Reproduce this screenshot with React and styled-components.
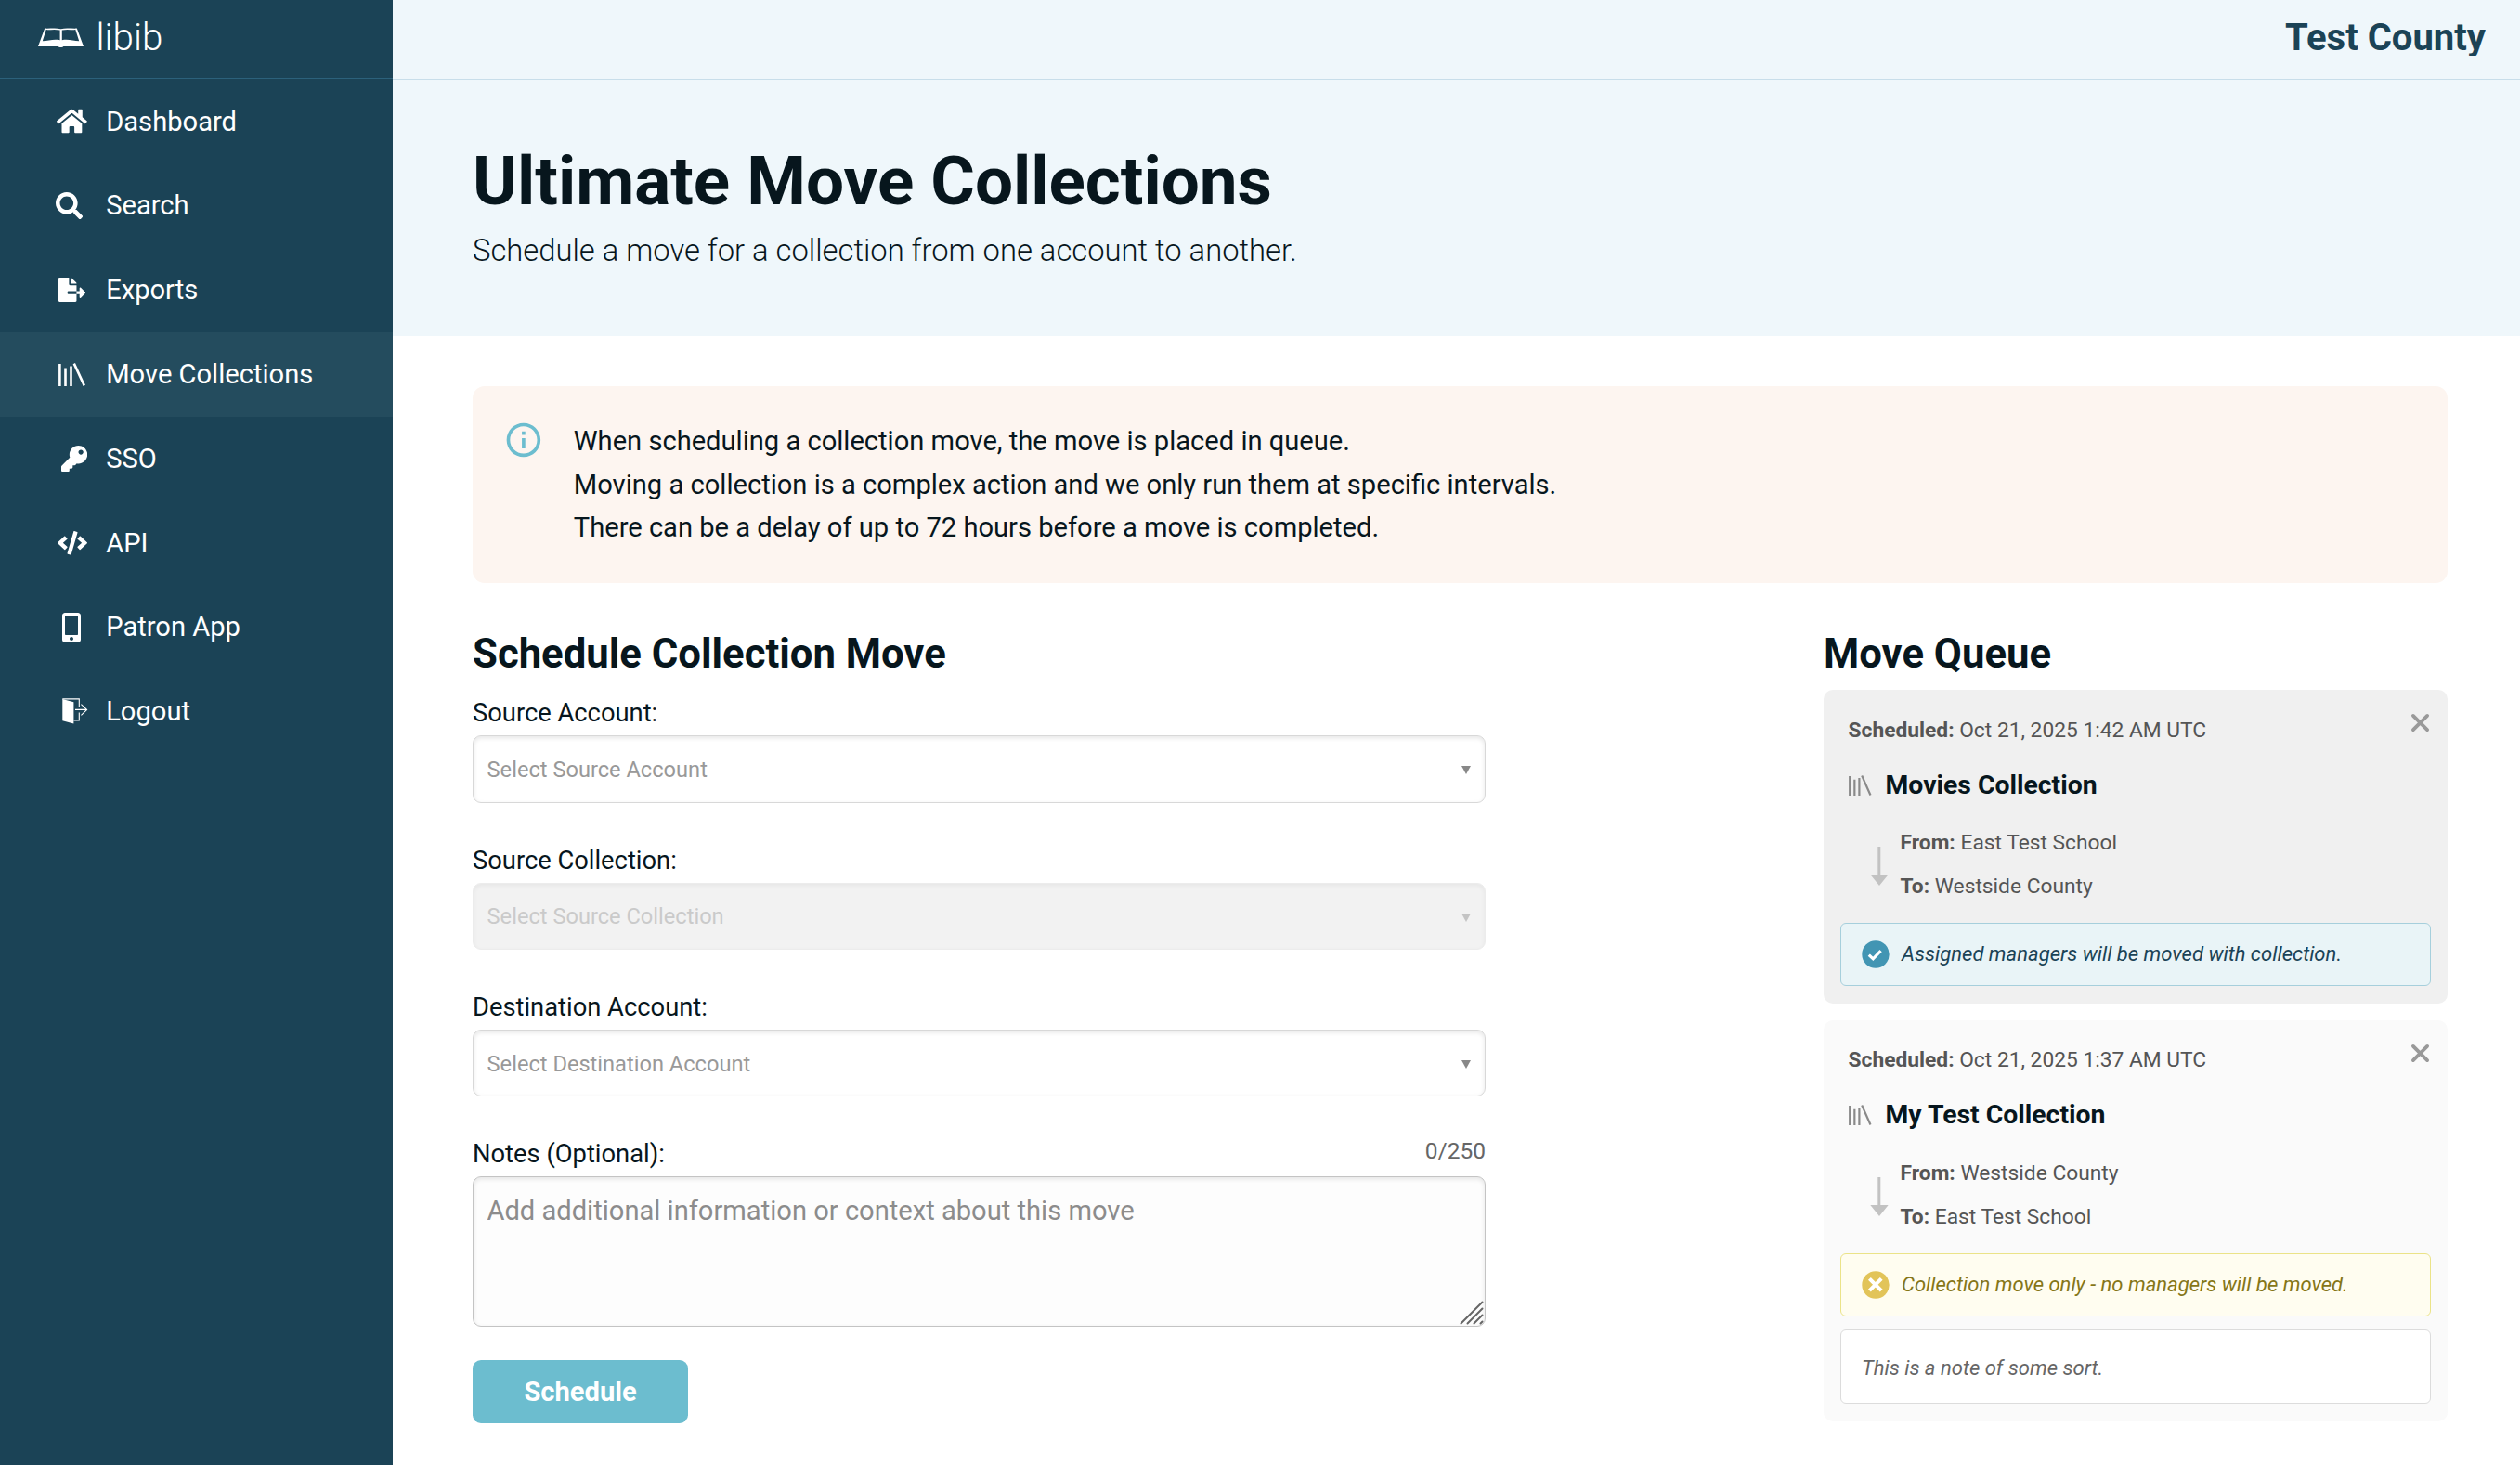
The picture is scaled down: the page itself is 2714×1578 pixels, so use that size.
import React from "react";
import styled, { createGlobalStyle, css } from "styled-components";
import { FaHome, FaSearch, FaFileExport, FaKey, FaCode, FaMobileAlt } from "react-icons/fa";
import { MdInfoOutline } from "react-icons/md";

const GlobalStyle = createGlobalStyle`
  *, *::before, *::after { box-sizing: border-box; }
  body {
    margin: 0;
    background: #fff;
    color: #07161d;
    font-family: Roboto, "Liberation Sans", sans-serif;
    font-size: 29.12px;
    line-height: 1.6;
  }
  h1, h2, h3, p { margin: 0; }
`;

const Page = styled.div`
  display: flex;
  height: 1578px;
  overflow: hidden;
`;

/* ---------- Sidebar ---------- */

const Sidebar = styled.aside`
  flex: none;
  width: 423px;
  background: #1b4356;
  color: #fff;
`;

const Brand = styled.div`
  display: flex;
  height: 85px;
  padding-left: 41px;
  border-bottom: 1px solid #2c617b;
`;

const BrandMark = styled.svg`
  flex: none;
  width: 49px;
  height: 22px;
  margin-top: 30px;
`;

const BrandName = styled.span`
  margin-left: 13.5px;
  font-size: 40.3px;
  font-weight: 300;
  line-height: 82px;
`;

const Nav = styled.nav`
  padding-top: 0.5px;
`;

const NavItem = styled.a`
  display: flex;
  align-items: center;
  height: 90.8px;
  background: ${(p) => (p.$active ? "#244c5e" : "transparent")};
  color: #fff;
  text-decoration: none;
`;

const NavIcon = styled.span`
  display: flex;
  flex: none;
  align-items: center;
  width: 114.2px;
  padding-left: ${(p) => p.$left}px;

  svg {
    flex: none;
    width: ${(p) => p.$w}px;
    height: ${(p) => p.$h}px;
  }
`;

/* ---------- Main ---------- */

const Main = styled.main`
  flex: 1;
  min-width: 0;
`;

const TopBar = styled.header`
  display: flex;
  justify-content: flex-end;
  height: 86px;
  padding: 20px 37px 0 0;
  background: #eff7fb;
  border-bottom: 1px solid #c8deea;
`;

const OrgName = styled.div`
  height: 40px;
  overflow: hidden;
  color: #1b4356;
  font-size: 40.04px;
  font-weight: 700;
  line-height: 41px;
`;

const Hero = styled.section`
  height: 276px;
  padding: 65px 86px 0;
  background: #eff7fb;
`;

const HeroTitle = styled.h1`
  font-size: 72.8px;
  font-weight: 700;
  line-height: 88px;
`;

const HeroText = styled.p`
  margin-top: 7.2px;
  font-size: 32.76px;
  font-weight: 300;
  line-height: 48px;
`;

const Content = styled.div`
  padding: 54px 78px 0 86px;
`;

const Banner = styled.div`
  display: flex;
  height: 212px;
  padding: 36.2px 32.5px 0;
  background: #fdf5f0;
  border-radius: 13px;

  svg {
    flex: none;
    width: 43.8px;
    height: 43.8px;
    color: #6cbdcf;
  }
`;

const BannerText = styled.p`
  margin-left: 32.5px;
`;

const Columns = styled.div`
  display: flex;
  justify-content: space-between;
  margin-top: 46px;
`;

const SectionTitle = styled.h2`
  font-size: 43.68px;
  font-weight: 700;
  line-height: 60px;
`;

/* ---------- Form ---------- */

const Form = styled.form`
  width: 1091px;
`;

const Fields = styled.div`
  display: flex;
  flex-direction: column;
  gap: 39px;
  margin-top: 11.3px;
`;

const LabelRow = styled.div`
  display: flex;
  justify-content: space-between;
  height: 44px;
  margin-bottom: 3px;
`;

const Label = styled.label`
  font-size: 27.34px;
  line-height: 46px;
`;

const Counter = styled.span`
  color: #666;
  font-size: 24.5px;
  line-height: 39.4px;
`;

const control = css`
  width: 100%;
  border: 1px solid #d8d8d8;
  border-radius: 9px;
  box-shadow: inset 0 2px 5px rgba(0, 0, 0, 0.1);
`;

const SelectBox = styled.div`
  ${control}
  display: flex;
  align-items: center;
  justify-content: space-between;
  height: 72.4px;
  padding: 3px 15px 0 14.6px;
  color: #999;
  font-size: 23.64px;
  background: #fff;

  ${(p) =>
    p.$disabled &&
    css`
      color: #cacaca;
      background: #f2f2f2;
      border-color: #ececec;
      box-shadow: inset 0 2px 5px rgba(0, 0, 0, 0.05);
    `}
`;

const Caret = styled.span`
  border: 5.5px solid transparent;
  border-top: 9.5px solid ${(p) => (p.$disabled ? "#c4c4c4" : "#888")};
  border-bottom: 0;
`;

const NotesWrap = styled.div`
  position: relative;
  height: 161.4px;
`;

const Notes = styled.textarea`
  ${control}
  display: block;
  height: 100%;
  padding: 13px 14.4px;
  border-color: #c4c4c4;
  background: #fdfdfd;
  color: #07161d;
  font: inherit;
  line-height: 46.6px;
  resize: none;

  &::placeholder {
    color: #8c8c8c;
    opacity: 1;
  }
`;

const Grip = styled.svg`
  position: absolute;
  right: 2px;
  bottom: 2px;
  width: 26px;
  height: 26px;
`;

const SubmitButton = styled.button`
  width: 232px;
  height: 68px;
  margin-top: 36px;
  padding: 0;
  border: 0;
  border-radius: 9px;
  background: #6cbdcf;
  color: #fff;
  font: inherit;
  font-weight: 700;
  display: block;
`;

/* ---------- Queue ---------- */

const Queue = styled.section`
  width: 672px;
`;

const Cards = styled.div`
  display: flex;
  flex-direction: column;
  gap: 17.8px;
  margin-top: 9px;
`;

const Card = styled.article`
  position: relative;
  padding: 25.7px 18px 18.6px;
  background: ${(p) => (p.$muted ? "#fafafa" : "#f0f0f0")};
  border-radius: 10px;
`;

const CloseButton = styled.button`
  position: absolute;
  top: 24.4px;
  right: 18px;
  display: flex;
  padding: 0;
  border: 0;
  background: none;
  color: #999;

  svg {
    width: 23px;
    height: 23px;
  }
`;

const Meta = styled.p`
  padding-left: 8.5px;
  color: #555;
  font-size: 22.77px;
  line-height: 36px;
`;

const CardTitle = styled.h3`
  display: flex;
  align-items: center;
  margin-top: 18px;
  padding-left: 9px;
  font-size: 28.36px;
  font-weight: 700;
  line-height: 46px;

  svg {
    width: 24.5px;
    height: 22px;
    margin-right: 15px;
    color: #8a8a8a;
  }
`;

const Route = styled.div`
  display: flex;
  margin-top: 15.4px;
  padding-left: 32.3px;
  color: #555;
  font-size: 22.77px;
  line-height: 47px;

  svg {
    flex: none;
    width: 20px;
    height: 42px;
    margin: 28px 12.3px 0 0;
  }
`;

const tones = {
  info: { bg: "#e9f4f7", line: "#a6cfdc", text: "#1b4356", icon: "#4295b3" },
  warn: { bg: "#fffdf0", line: "#ebe388", text: "#857618", icon: "#e2c459" },
  plain: { bg: "#fff", line: "#dcdcdc", text: "#666", icon: "#666" },
};

const Notice = styled.div`
  display: flex;
  align-items: center;
  height: ${(p) => (p.$tone === "plain" ? 80 : 68.4)}px;
  margin-top: ${(p) => (p.$tone === "plain" ? 14 : 15.9)}px;
  padding: ${(p) => (p.$tone === "plain" ? 4 : 0)}px 0 0 22px;
  border: 1px solid ${(p) => tones[p.$tone].line};
  border-radius: 6px;
  background: ${(p) => tones[p.$tone].bg};
  color: ${(p) => tones[p.$tone].text};
  font-size: 22.05px;
  font-style: italic;
  line-height: 36px;

  svg {
    flex: none;
    width: 30px;
    height: 30px;
    margin-right: 13px;
    color: ${(p) => tones[p.$tone].icon};
  }
`;

/* ---------- Drawings ---------- */

const BookLogo = () => (
  <BrandMark viewBox="0 0 49 22" fill="#fff">
    <path
      fillRule="evenodd"
      d="M7.2 .6 C13 .9 19 -.3 24.5 1.2 C30 -.3 36 .9 41.8 .6 L49 20 H27.3 C27 21.3 22 21.3 21.7 20 H0 Z
         M8.7 2.1 L4.8 14.2 C11 14 17 11.6 23.6 13.2 V2.6 C18.5 1.2 13.5 2.3 8.7 2.1 Z
         M40.3 2.1 C35.5 2.3 30.5 1.2 25.8 2.6 V13.2 C32 11.6 38 14 44.2 14.2 Z"
    />
  </BrandMark>
);

const LibraryIcon = () => (
  <svg viewBox="0 0 29 25" preserveAspectRatio="none" stroke="currentColor" strokeWidth="2.6" fill="none">
    <path d="M1.4 1V25M7.5 5.5V25M13.5 3.5V25M16.8 .6L27.8 24.4" />
  </svg>
);

const LogoutIcon = () => (
  <svg viewBox="0 0 28 28" fill="none" stroke="#fff" strokeWidth="1.1">
    <path d="M.3 .9L12.4 4.3V27.5L.3 24.2Z" fill="#fff" stroke="none" />
    <path d="M.3 .9H18.3V9.3M18.3 15.4V24H12.4M14 12.4H26.6M20.4 6.6L26.6 12.4L20.4 18.4" />
  </svg>
);

const CloseIcon = () => (
  <svg viewBox="0 0 23 23" stroke="currentColor" strokeWidth="3.8" strokeLinecap="round">
    <path d="M3.9 3.9L19.1 19.1M19.1 3.9L3.9 19.1" />
  </svg>
);

const RouteArrow = () => (
  <svg viewBox="0 0 20 42" fill="#c2c2c2">
    <path d="M8.3 0H11.3V30H19.7L10 42L.3 30H8.3Z" />
  </svg>
);

const CheckBadge = () => (
  <svg viewBox="0 0 30 30" fill="none">
    <circle cx="15" cy="15" r="14.7" fill="currentColor" />
    <path d="M7.8 15.6L12.3 19.8L20.6 11.2" stroke="#fff" strokeWidth="3.2" />
  </svg>
);

const CrossBadge = () => (
  <svg viewBox="0 0 30 30" fill="none">
    <circle cx="15" cy="15" r="14.7" fill="currentColor" />
    <path d="M8.4 8.4L21.2 21.2M21.2 8.4L8.4 21.2" stroke="#fff" strokeWidth="4" />
  </svg>
);

const navItems = [
  { label: "Dashboard", Icon: FaHome, left: 61, w: 32.8, h: 29.1 },
  { label: "Search", Icon: FaSearch, left: 60, w: 29.1, h: 29.1 },
  { label: "Exports", Icon: FaFileExport, left: 63, w: 29.2, h: 26 },
  { label: "Move Collections", Icon: LibraryIcon, left: 63, w: 29, h: 25, active: true },
  { label: "SSO", Icon: FaKey, left: 66, w: 28.2, h: 28.2 },
  { label: "API", Icon: FaCode, left: 61.5, w: 32, h: 25.6 },
  { label: "Patron App", Icon: FaMobileAlt, left: 67, w: 20, h: 32 },
  { label: "Logout", Icon: LogoutIcon, left: 67, w: 28, h: 28 },
];

const selects = [
  { label: "Source Account:", text: "Select Source Account" },
  { label: "Source Collection:", text: "Select Source Collection", disabled: true },
  { label: "Destination Account:", text: "Select Destination Account" },
];

const moves = [
  {
    date: "Oct 21, 2025 1:42 AM UTC",
    title: "Movies Collection",
    from: "East Test School",
    to: "Westside County",
    tone: "info",
    notice: "Assigned managers will be moved with collection.",
  },
  {
    date: "Oct 21, 2025 1:37 AM UTC",
    title: "My Test Collection",
    from: "Westside County",
    to: "East Test School",
    tone: "warn",
    notice: "Collection move only - no managers will be moved.",
    note: "This is a note of some sort.",
    muted: true,
  },
];

const MoveCard = ({ move }) => (
  <Card $muted={move.muted}>
    <CloseButton type="button" aria-label="Cancel move">
      <CloseIcon />
    </CloseButton>
    <Meta>
      <b>Scheduled:</b> {move.date}
    </Meta>
    <CardTitle>
      <LibraryIcon />
      {move.title}
    </CardTitle>
    <Route>
      <RouteArrow />
      <div>
        <div>
          <b>From:</b> {move.from}
        </div>
        <div>
          <b>To:</b> {move.to}
        </div>
      </div>
    </Route>
    <Notice $tone={move.tone}>
      {move.tone === "info" ? <CheckBadge /> : <CrossBadge />}
      {move.notice}
    </Notice>
    {move.note && <Notice $tone="plain">{move.note}</Notice>}
  </Card>
);

export default function App() {
  return (
    <>
      <GlobalStyle />
      <Page>
        <Sidebar>
          <Brand>
            <BookLogo />
            <BrandName>libib</BrandName>
          </Brand>
          <Nav>
            {navItems.map(({ label, Icon, left, w, h, active }) => (
              <NavItem key={label} $active={active}>
                <NavIcon $left={left} $w={w} $h={h}>
                  <Icon />
                </NavIcon>
                {label}
              </NavItem>
            ))}
          </Nav>
        </Sidebar>
        <Main>
          <TopBar>
            <OrgName>Test County</OrgName>
          </TopBar>
          <Hero>
            <HeroTitle>Ultimate Move Collections</HeroTitle>
            <HeroText>Schedule a move for a collection from one account to another.</HeroText>
          </Hero>
          <Content>
            <Banner>
              <MdInfoOutline />
              <BannerText>
                When scheduling a collection move, the move is placed in queue.
                <br />
                Moving a collection is a complex action and we only run them at specific intervals.
                <br />
                There can be a delay of up to 72 hours before a move is completed.
              </BannerText>
            </Banner>
            <Columns>
              <Form>
                <SectionTitle>Schedule Collection Move</SectionTitle>
                <Fields>
                  {selects.map(({ label, text, disabled }) => (
                    <div key={label}>
                      <LabelRow>
                        <Label>{label}</Label>
                      </LabelRow>
                      <SelectBox $disabled={disabled}>
                        {text}
                        <Caret $disabled={disabled} />
                      </SelectBox>
                    </div>
                  ))}
                  <div>
                    <LabelRow>
                      <Label htmlFor="notes">Notes (Optional):</Label>
                      <Counter>0/250</Counter>
                    </LabelRow>
                    <NotesWrap>
                      <Notes id="notes" placeholder="Add additional information or context about this move" />
                      <Grip viewBox="0 0 26 26" stroke="#666" strokeWidth="2" strokeLinecap="round">
                        <path d="M1.5 24.5L24.5 1.5M8.5 24.5L24.5 8.5M15.5 24.5L24.5 15.5M22.5 24.5L24.5 22.5" />
                      </Grip>
                    </NotesWrap>
                  </div>
                </Fields>
                <SubmitButton type="button">Schedule</SubmitButton>
              </Form>
              <Queue>
                <SectionTitle>Move Queue</SectionTitle>
                <Cards>
                  {moves.map((move) => (
                    <MoveCard key={move.title} move={move} />
                  ))}
                </Cards>
              </Queue>
            </Columns>
          </Content>
        </Main>
      </Page>
    </>
  );
}
